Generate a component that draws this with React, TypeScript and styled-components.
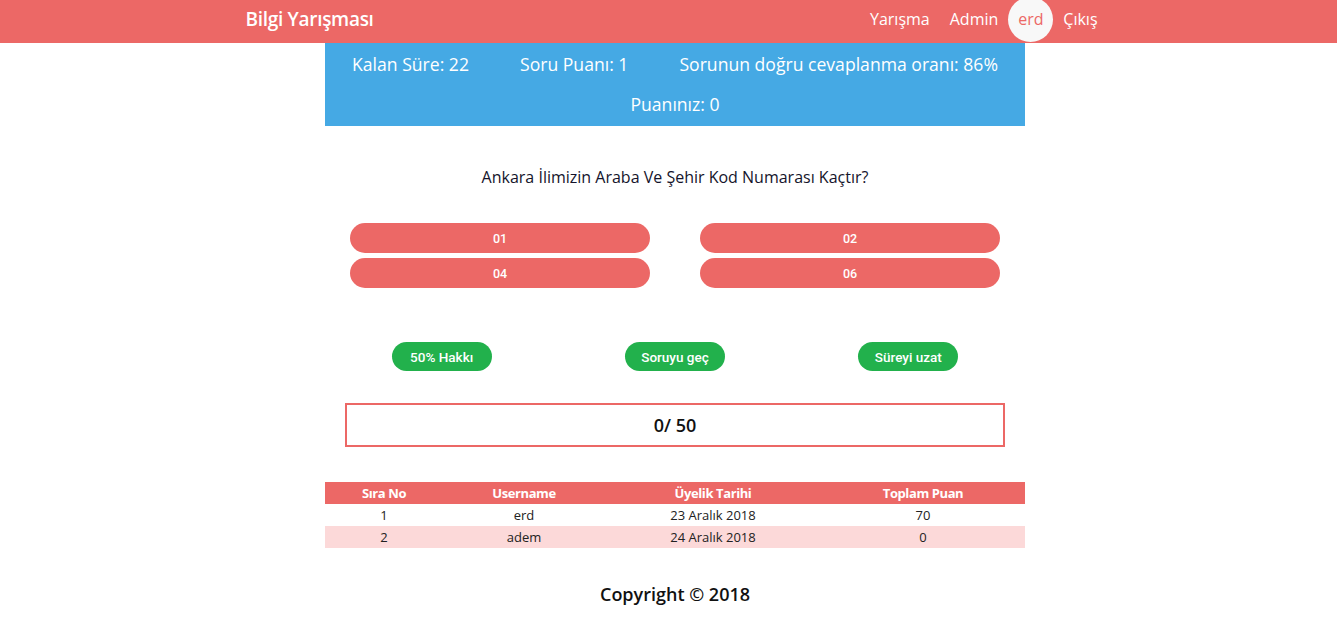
import React from "react";
import styled, { createGlobalStyle } from "styled-components";

const Global = createGlobalStyle`
  body { margin: 0; font-family: "Open Sans", "DejaVu Sans", sans-serif; background: #fff; }
  * { box-sizing: border-box; }
`;

const Nav = styled.nav`
  height: 43px;
  background: #ec6866;
`;
const NavInner = styled.div`
  width: 872px;
  margin: 0 auto;
  height: 100%;
  display: flex;
  align-items: center;
  justify-content: space-between;
  padding: 0 7px 5px 13px;
`;
const Brand = styled.div`
  color: #fff;
  font-size: 19px;
  font-weight: 600;
  letter-spacing: -0.3px;
`;
const NavLinks = styled.div`
  display: flex;
  align-items: center;
  gap: 20px;
`;
const NavLink = styled.span<{ $active?: boolean }>`
  color: ${(p) => (p.$active ? "#ec6866" : "#fff")};
  font-size: 16px;
  ${(p) =>
    p.$active &&
    `background:#f8f8f8;border-radius:50%;width:45px;height:45px;display:flex;align-items:center;justify-content:center;margin:0 -10px 0 -10px;`}
`;

const Main = styled.main`
  width: 700px;
  margin-left: calc(50% - 343.5px);
`;
const InfoBox = styled.div`
  background: #45a9e4;
  color: #fff;
  height: 83px;
  font-size: 17.6px;
  display: flex;
  flex-direction: column;
  align-items: center;
  padding-top: 9px;
  gap: 16px;
`;
const InfoRow = styled.div`
  display: flex;
  gap: 51px;
  line-height: 24px;
`;
const Question = styled.div`
  text-align: center;
  font-size: 16px;
  color: #14142b;
  margin-top: 40px;
  line-height: 22px;
`;
const Answers = styled.div`
  display: grid;
  grid-template-columns: 300px 300px;
  justify-content: center;
  column-gap: 50px;
  row-gap: 5px;
  margin-top: 35px;
`;
const Answer = styled.button`
  height: 30px;
  border: none;
  border-radius: 15px;
  background: #ec6866;
  color: #fff;
  font-family: Roboto, "Liberation Sans", Arial, sans-serif;
  font-size: 12.5px;
  font-weight: 500;
  padding: 0;
`;
const Jokers = styled.div`
  display: grid;
  grid-template-columns: repeat(3, 1fr);
  justify-items: center;
  margin-top: 54px;
`;
const Joker = styled.button`
  width: 100px;
  height: 29px;
  border: none;
  border-radius: 15px;
  background: #22b14c;
  color: #fff;
  font-family: Roboto, "Liberation Sans", Arial, sans-serif;
  font-size: 13.5px;
  font-weight: 500;
  padding: 0;
`;
const Score = styled.div`
  margin: 32px 20px 0;
  height: 44px;
  border: 2px solid #ec6866;
  display: flex;
  align-items: center;
  justify-content: center;
  font-size: 18px;
  font-weight: 600;
  color: #111;
`;
const Table = styled.table`
  width: 700px;
  border-collapse: collapse;
  margin-top: 35px;
  font-size: 13px;
  text-align: center;
  table-layout: fixed;
`;
const Th = styled.th<{ $w: number }>`
  width: ${(p) => p.$w}px;
  background: #ec6866;
  color: #fff;
  font-weight: 700;
  height: 22px;
  padding: 0;
  letter-spacing: -0.4px;
`;
const Tr = styled.tr<{ $alt?: boolean }>`
  background: ${(p) => (p.$alt ? "#fcd9d9" : "#fff")};
`;
const Td = styled.td`
  height: 22px;
  padding: 0;
  color: #222;
`;
const Footer = styled.footer`
  text-align: center;
  font-size: 18px;
  font-weight: 600;
  color: #111;
  margin-top: 34px;
`;

export default function App() {
  return (
    <>
      <Global />
      <Nav>
        <NavInner>
          <Brand>Bilgi Yarışması</Brand>
          <NavLinks>
            <NavLink>Yarışma</NavLink>
            <NavLink>Admin</NavLink>
            <NavLink $active>erd</NavLink>
            <NavLink>Çıkış</NavLink>
          </NavLinks>
        </NavInner>
      </Nav>
      <Main>
        <InfoBox>
          <InfoRow>
            <span>Kalan Süre: 22</span>
            <span>Soru Puanı: 1</span>
            <span>Sorunun doğru cevaplanma oranı: 86%</span>
          </InfoRow>
          <InfoRow>
            <span>Puanınız: 0</span>
          </InfoRow>
        </InfoBox>
        <Question>Ankara İlimizin Araba Ve Şehir Kod Numarası Kaçtır?</Question>
        <Answers>
          <Answer>01</Answer>
          <Answer>02</Answer>
          <Answer>04</Answer>
          <Answer>06</Answer>
        </Answers>
        <Jokers>
          <Joker>50% Hakkı</Joker>
          <Joker>Soruyu geç</Joker>
          <Joker>Süreyi uzat</Joker>
        </Jokers>
        <Score>0/ 50</Score>
        <Table>
          <thead>
            <tr>
              <Th $w={118}>Sıra No</Th>
              <Th $w={162}>Username</Th>
              <Th $w={216}>Üyelik Tarihi</Th>
              <Th $w={204}>Toplam Puan</Th>
            </tr>
          </thead>
          <tbody>
            <Tr>
              <Td>1</Td>
              <Td>erd</Td>
              <Td>23 Aralık 2018</Td>
              <Td>70</Td>
            </Tr>
            <Tr $alt>
              <Td>2</Td>
              <Td>adem</Td>
              <Td>24 Aralık 2018</Td>
              <Td>0</Td>
            </Tr>
          </tbody>
        </Table>
        <Footer>Copyright © 2018</Footer>
      </Main>
    </>
  );
}
